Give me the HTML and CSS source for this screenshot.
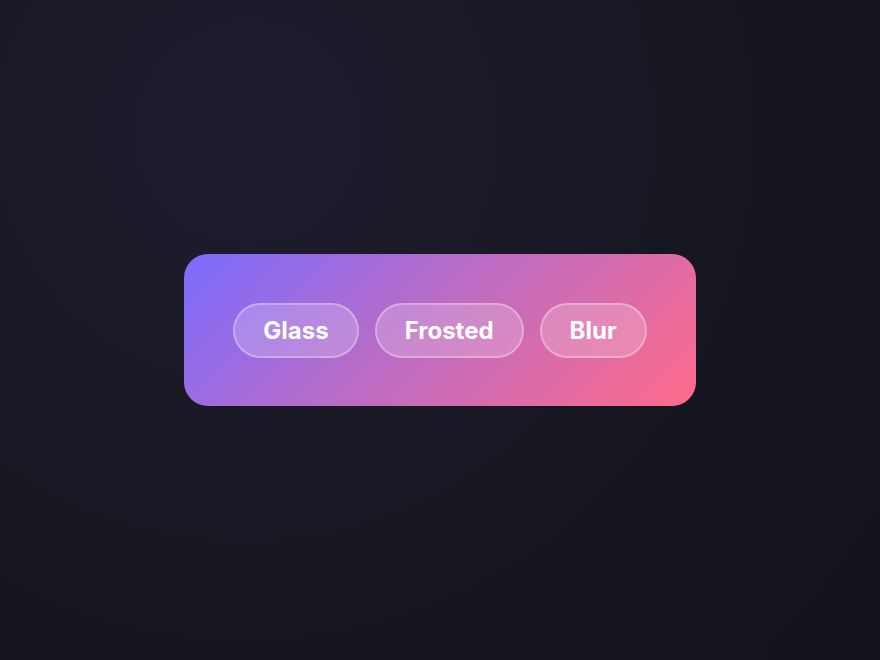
FILE: index.html
```html
<!DOCTYPE html>
<html>
<head>
<meta charset="utf-8">
<link rel="stylesheet" href="styles.css">
</head>
<body>
<main class="stage">
  <div class="card">
    <span class="pill">Glass</span>
    <span class="pill">Frosted</span>
    <span class="pill">Blur</span>
  </div>
</main>
</body>
</html>
```

FILE: styles.css
```css
html, body {
  margin: 0;
  height: 100%;
}
body {
  background: radial-gradient(circle at 28% 20%, #1e1d2f 0%, #191926 35%, #14141d 75%, #13131c 100%);
  font-family: Inter, "Noto Sans", sans-serif;
}
.stage {
  height: 100%;
  display: flex;
  align-items: center;
  justify-content: center;
}
.card {
  width: 512px;
  height: 152px;
  box-sizing: border-box;
  border-radius: 24px;
  background: linear-gradient(135deg, #7b6cff 0%, #c06cc0 50%, #ff6b8a 100%);
  display: flex;
  align-items: center;
  justify-content: center;
  gap: 16px;
}
.pill {
  display: inline-block;
  padding: 11px 28px;
  border: 2px solid rgba(255, 255, 255, 0.3);
  border-radius: 999px;
  background: rgba(255, 255, 255, 0.2);
  color: #ffffff;
  font-size: 24px;
  font-weight: 700;
  line-height: 29px;
}
```
